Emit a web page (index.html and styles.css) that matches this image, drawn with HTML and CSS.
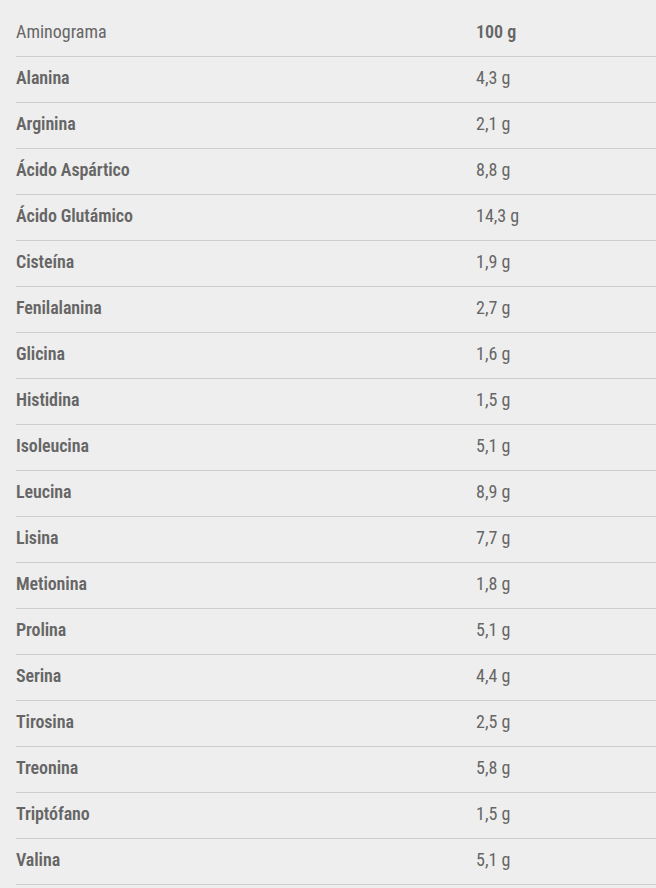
FILE: index.html
```html
<!DOCTYPE html>
<html lang="es">
<head>
<meta charset="utf-8">
<link rel="stylesheet" href="styles.css">
</head>
<body>
<div class="table">
  <div class="row head"><span class="name">Aminograma</span><span class="val">100 g</span></div>
  <div class="row"><span class="name">Alanina</span><span class="val">4,3 g</span></div>
  <div class="row"><span class="name">Arginina</span><span class="val">2,1 g</span></div>
  <div class="row"><span class="name">Ácido Aspártico</span><span class="val">8,8 g</span></div>
  <div class="row"><span class="name">Ácido Glutámico</span><span class="val">14,3 g</span></div>
  <div class="row"><span class="name">Cisteína</span><span class="val">1,9 g</span></div>
  <div class="row"><span class="name">Fenilalanina</span><span class="val">2,7 g</span></div>
  <div class="row"><span class="name">Glicina</span><span class="val">1,6 g</span></div>
  <div class="row"><span class="name">Histidina</span><span class="val">1,5 g</span></div>
  <div class="row"><span class="name">Isoleucina</span><span class="val">5,1 g</span></div>
  <div class="row"><span class="name">Leucina</span><span class="val">8,9 g</span></div>
  <div class="row"><span class="name">Lisina</span><span class="val">7,7 g</span></div>
  <div class="row"><span class="name">Metionina</span><span class="val">1,8 g</span></div>
  <div class="row"><span class="name">Prolina</span><span class="val">5,1 g</span></div>
  <div class="row"><span class="name">Serina</span><span class="val">4,4 g</span></div>
  <div class="row"><span class="name">Tirosina</span><span class="val">2,5 g</span></div>
  <div class="row"><span class="name">Treonina</span><span class="val">5,8 g</span></div>
  <div class="row"><span class="name">Triptófano</span><span class="val">1,5 g</span></div>
  <div class="row"><span class="name">Valina</span><span class="val">5,1 g</span></div>
</div>
</body>
</html>
```
FILE: styles.css
```css
html, body {
  margin: 0;
  padding: 0;
  background: #eeeeee;
}
body {
  padding: 11px 0 0 16px;
  font-family: "Roboto Condensed", "Open Sans", sans-serif;
  font-size: 18px;
  color: #666666;
  overflow: hidden;
}
.table {
  display: flex;
  flex-direction: column;
}
.row {
  box-sizing: border-box;
  display: grid;
  grid-template-columns: 460px 1fr;
  height: 46px;
  padding-bottom: 3px;
  align-items: center;
  border-bottom: 1px solid #cccccc;
  line-height: 20px;
}
.row .name {
  font-weight: 600;
  letter-spacing: -0.1px;
}
.row .val {
  font-weight: 400;
}
.row.head .name {
  font-weight: 400;
  letter-spacing: 0;
}
.row.head .val {
  font-weight: 600;
}
```
